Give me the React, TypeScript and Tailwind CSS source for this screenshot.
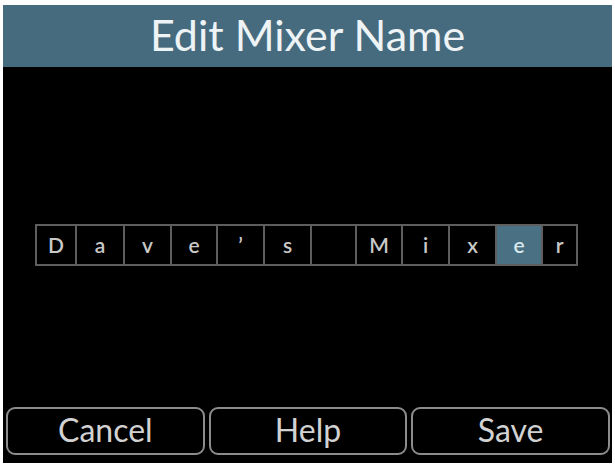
import React from "react";

const cells = [
  { ch: "D", w: "w-[42px] border-l-2" },
  { ch: "a", w: "w-[48px]" },
  { ch: "v", w: "w-[47px]" },
  { ch: "e", w: "w-[46px]" },
  { ch: "\u2019", w: "w-[47px]" },
  { ch: "s", w: "w-[47px]" },
  { ch: "", w: "w-[45px]" },
  { ch: "M", w: "w-[46px]" },
  { ch: "i", w: "w-[47px]" },
  { ch: "x", w: "w-[47px]" },
  { ch: "e", w: "w-[46px]", active: true },
  { ch: "r", w: "w-[35px]" },
];

const App = () => {
  return (
    <div className="w-[615px] h-[465px] bg-white pt-[5px] pl-[3px] pr-[3px] pb-[2px]">
      <div className="h-full flex flex-col bg-black" style={{ fontFamily: "Lato, 'Open Sans', sans-serif" }}>
        <header className="h-[62px] bg-[#476b7e] flex items-center justify-center">
          <h1 className="text-[#eef4f6] text-[43px] leading-none pb-[4px]">Edit Mixer Name</h1>
        </header>

        <section className="flex-1 flex flex-col">
          <div className="mt-[157px] ml-[32px] flex">
            {cells.map((c, i) => (
              <div
                key={i}
                className={
                  "h-[42px] border-y-2 border-r-2 border-[#5e5e5e] flex items-center justify-center text-[21px] font-semibold text-[#c9c9c9] " +
                  c.w +
                  (c.active ? " bg-[#4a7083] text-[#d8e8ee]" : "")
                }
              >
                {c.ch}
              </div>
            ))}
          </div>

          <div className="mt-auto grid grid-cols-3 gap-[4px] pl-[3px] pr-[2px] pb-[8px]">
            {["Cancel", "Help", "Save"].map((label) => (
              <button
                key={label}
                className="h-[48px] rounded-[9px] border-2 border-[#8c8c8c] text-[#d2d2d2] text-[32px] leading-none pb-[3px]"
              >
                {label}
              </button>
            ))}
          </div>
        </section>
      </div>
    </div>
  );
};

export default App;
